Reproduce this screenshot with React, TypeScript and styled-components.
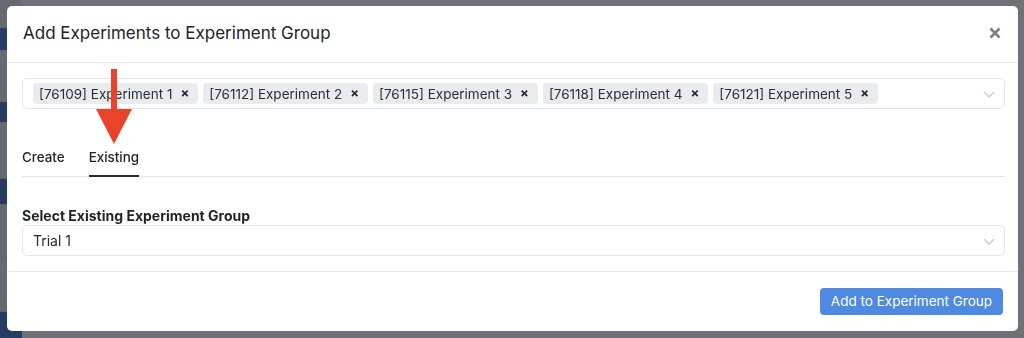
import React, { useState } from "react";
import styled, { createGlobalStyle } from "styled-components";

const GlobalStyle = createGlobalStyle`
  html, body {
    margin: 0;
    padding: 0;
    width: 1024px;
    height: 338px;
    overflow: hidden;
    font-family: Inter, "Liberation Sans", sans-serif;
    color: #212529;
  }
`;

// the page behind the dialog, dimmed by the backdrop
const Page = styled.div`
  width: 1024px;
  height: 338px;
  display: flex;
  background: #fff;
`;
const Sidebar = styled.div`
  width: 22px;
  display: flex;
  flex-direction: column;
  padding-top: 28px;
  background: #d5d8dc;
`;
const SideItem = styled.div<{ active?: boolean; h: number }>`
  height: ${(p) => p.h}px;
  flex-shrink: 0;
  background: ${(p) => (p.active ? "#2f64b8" : "#d5d8dc")};
  border-bottom: 1px solid #c4c7cc;
`;
const PageMain = styled.div`
  flex: 1;
  background: #eceef0;
`;

const Backdrop = styled.div`
  position: fixed;
  inset: 0;
  background: rgba(33, 37, 45, 0.62);
  padding: 6px 6px 7px 7px;
  box-sizing: border-box;
`;

const Modal = styled.div`
  width: 1011px;
  height: 325px;
  background: #fff;
  border-radius: 5px;
  display: flex;
  flex-direction: column;
  box-sizing: border-box;
`;

const Header = styled.div`
  height: 57px;
  display: flex;
  align-items: center;
  justify-content: space-between;
  padding: 0 15px 2px 16px;
  border-bottom: 1px solid #e6e8eb;
  box-sizing: border-box;
`;
const Title = styled.h5`
  margin: 0;
  font-size: 17px;
  font-weight: 400;
  color: #1f2328;
`;
const CloseBtn = styled.button`
  border: none;
  background: none;
  padding: 0;
  width: 16px;
  height: 16px;
  display: flex;
  align-items: center;
  justify-content: center;
  cursor: pointer;
`;

const Body = styled.div`
  flex: 1;
  padding: 15px 13px 0 15px;
  border-bottom: 1px solid #e6e8eb;
  position: relative;
`;

const SelectBox = styled.div`
  min-height: 31px;
  border: 1px solid #e3e5e8;
  border-radius: 5px;
  display: flex;
  align-items: center;
  padding: 0 8px 0 10px;
  box-sizing: border-box;
`;
const Chips = styled.div`
  flex: 1;
  display: flex;
  gap: 5px;
  align-items: center;
`;
const Chip = styled.span`
  height: 21px;
  display: inline-flex;
  align-items: center;
  gap: 8px;
  padding: 0 6px;
  background: #e9ebee;
  border-radius: 4px;
  font-size: 13.5px;
  color: #2b2f33;
  white-space: nowrap;
`;
const ChipX = styled.span`
  font-size: 13px;
  font-weight: 700;
  color: #1e2226;
  line-height: 1;
  padding-right: 3px;
`;
const SingleValue = styled.span`
  flex: 1;
  font-size: 14px;
  color: #25292d;
`;

const Tabs = styled.div`
  display: flex;
  gap: 24px;
  margin-top: 40px;
  border-bottom: 1px solid #e3e5e8;
`;
const Tab = styled.button<{ active?: boolean }>`
  border: none;
  background: none;
  padding: 0 0 10px;
  font-family: inherit;
  font-size: 13.4px;
  font-weight: 500;
  color: #22262a;
  cursor: pointer;
  border-bottom: 2px solid ${(p) => (p.active ? "#2a2e33" : "transparent")};
  margin-bottom: -1px;
`;

const Field = styled.div`
  margin-top: 30px;
`;
const Label = styled.div`
  font-size: 14px;
  font-weight: 700;
  color: #1f2328;
  margin-bottom: 1px;
`;

const Footer = styled.div`
  height: 59px;
  display: flex;
  align-items: center;
  justify-content: flex-end;
  padding: 0 15px 1px;
  box-sizing: border-box;
`;
const PrimaryBtn = styled.button`
  height: 27px;
  padding: 0 11px;
  border: none;
  border-radius: 4px;
  background: #4f8ae0;
  color: #fff;
  font-family: inherit;
  font-size: 13.5px;
  cursor: pointer;
`;

const Arrow = styled.svg`
  position: absolute;
  left: 87px;
  top: 6px;
`;

const Chevron = () => (
  <svg width="14" height="14" viewBox="0 0 14 14">
    <path d="M2 5l5 5 5-5" fill="none" stroke="#c9ccd1" strokeWidth="1.4" />
  </svg>
);

const experiments = [
  "[76109] Experiment 1",
  "[76112] Experiment 2",
  "[76115] Experiment 3",
  "[76118] Experiment 4",
  "[76121] Experiment 5",
];

export default function App() {
  const [tab, setTab] = useState<"create" | "existing">("existing");
  return (
    <>
      <GlobalStyle />
      <Page>
        <Sidebar>
          <SideItem active h={22} />
          <SideItem h={50} />
          <SideItem active h={20} />
          <SideItem h={55} />
          <SideItem active h={25} />
          <SideItem h={52} />
          <SideItem h={53} />
          <SideItem active h={40} />
        </Sidebar>
        <PageMain />
      </Page>
      <Backdrop>
        <Modal>
          <Header>
            <Title>Add Experiments to Experiment Group</Title>
            <CloseBtn aria-label="Close">
              <svg width="12" height="12" viewBox="0 0 12 12">
                <path d="M1.5 1.5l9 9M10.5 1.5l-9 9" stroke="#7d7f83" strokeWidth="2.6" />
              </svg>
            </CloseBtn>
          </Header>
          <Body>
            <SelectBox>
              <Chips>
                {experiments.map((e) => (
                  <Chip key={e}>
                    {e}
                    <ChipX>×</ChipX>
                  </Chip>
                ))}
              </Chips>
              <Chevron />
            </SelectBox>
            <Tabs>
              <Tab active={tab === "create"} onClick={() => setTab("create")}>
                Create
              </Tab>
              <Tab active={tab === "existing"} onClick={() => setTab("existing")}>
                Existing
              </Tab>
            </Tabs>
            <Field>
              <Label>Select Existing Experiment Group</Label>
              <SelectBox>
                <SingleValue>Trial 1</SingleValue>
                <Chevron />
              </SelectBox>
            </Field>
            <Arrow width="40" height="76" viewBox="0 0 40 76">
              <rect x="17" y="0" width="6" height="42" fill="#e9432b" />
              <polygon points="2,40 38,40 20,75" fill="#e9432b" />
            </Arrow>
          </Body>
          <Footer>
            <PrimaryBtn>Add to Experiment Group</PrimaryBtn>
          </Footer>
        </Modal>
      </Backdrop>
    </>
  );
}
